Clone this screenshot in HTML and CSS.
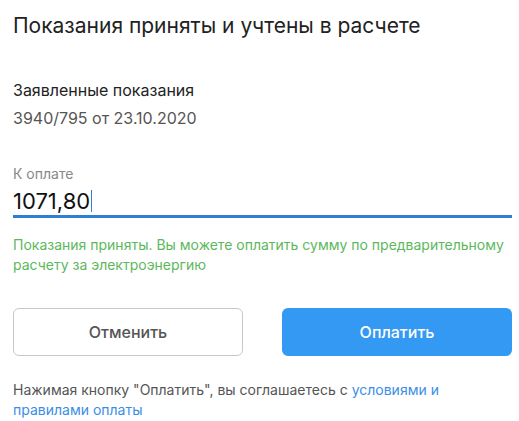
FILE: index.html
```html
<!DOCTYPE html>
<html lang="ru">
<head>
    <meta charset="UTF-8">
    <title>Показания приняты</title>
    <link rel="stylesheet" href="styles.css">
</head>
<body>
    <div class="container">
        <h1 class="title">Показания приняты и учтены в расчете</h1>

        <section class="readings">
            <div class="readings-label">Заявленные показания</div>
            <div class="readings-value">3940/795 от 23.10.2020</div>
        </section>

        <section class="amount">
            <label class="amount-label" for="amount">К оплате</label>
            <div class="amount-field">
                <span class="amount-value" id="amount">1071,80</span><span class="caret"></span>
            </div>
            <div class="amount-note">Показания приняты. Вы можете оплатить сумму по предварительному расчету за электроэнергию</div>
        </section>

        <div class="actions">
            <button class="btn btn-cancel">Отменить</button>
            <button class="btn btn-pay">Оплатить</button>
        </div>

        <p class="terms">Нажимая кнопку "Оплатить", вы соглашаетесь с <a href="#">условиями и правилами оплаты</a></p>
    </div>
</body>
</html>
```

FILE: styles.css
```css
:root {
    --text: #222;
    --muted: #555;
    --hint: #888;
    --blue: #2f7fd0;
    --pay: #3399f3;
    --green: #5cb85c;
    --link: #3a8ee6;
}

* {
    margin: 0;
    padding: 0;
    box-sizing: border-box;
}

body {
    background: #fff;
    color: var(--text);
    font-family: 'Inter', 'Noto Sans', sans-serif;
}

.container {
    padding: 12px 7px 0 13px;
}

.title {
    font-size: 21px;
    font-weight: 400;
    line-height: 28px;
    color: #222;
}

.readings {
    margin-top: 40px;
}

.readings-label {
    font-size: 16px;
    line-height: 20px;
    color: #222;
}

.readings-value {
    margin-top: 8px;
    font-size: 16px;
    line-height: 20px;
    color: var(--muted);
}

.amount {
    margin-top: 38px;
}

.amount-label {
    display: block;
    font-size: 14px;
    line-height: 16px;
    color: var(--hint);
}

.amount-field {
    display: flex;
    align-items: center;
    border-bottom: 3px solid var(--blue);
    height: 36px;
    padding-top: 4px;
}

.amount-value {
    font-size: 22px;
    line-height: 28px;
    color: #111;
}

.caret {
    width: 1px;
    height: 22px;
    background: var(--blue);
    margin-left: 1px;
}

.amount-note {
    margin-top: 17px;
    font-size: 14px;
    line-height: 20px;
    color: var(--green);
}

.actions {
    display: flex;
    justify-content: space-between;
    margin-top: 33px;
}

.btn {
    width: 230px;
    height: 48px;
    border-radius: 6px;
    font-family: inherit;
    font-size: 16px;
    font-weight: 500;
    cursor: pointer;
}

.btn-cancel {
    background: #fff;
    border: 1px solid #c8c8c8;
    color: #555;
}

.btn-pay {
    background: var(--pay);
    border: none;
    color: #fff;
}

.terms {
    margin-top: 24px;
    font-size: 14px;
    line-height: 20px;
    color: var(--muted);
}

.terms a {
    color: var(--link);
    text-decoration: none;
}
```
